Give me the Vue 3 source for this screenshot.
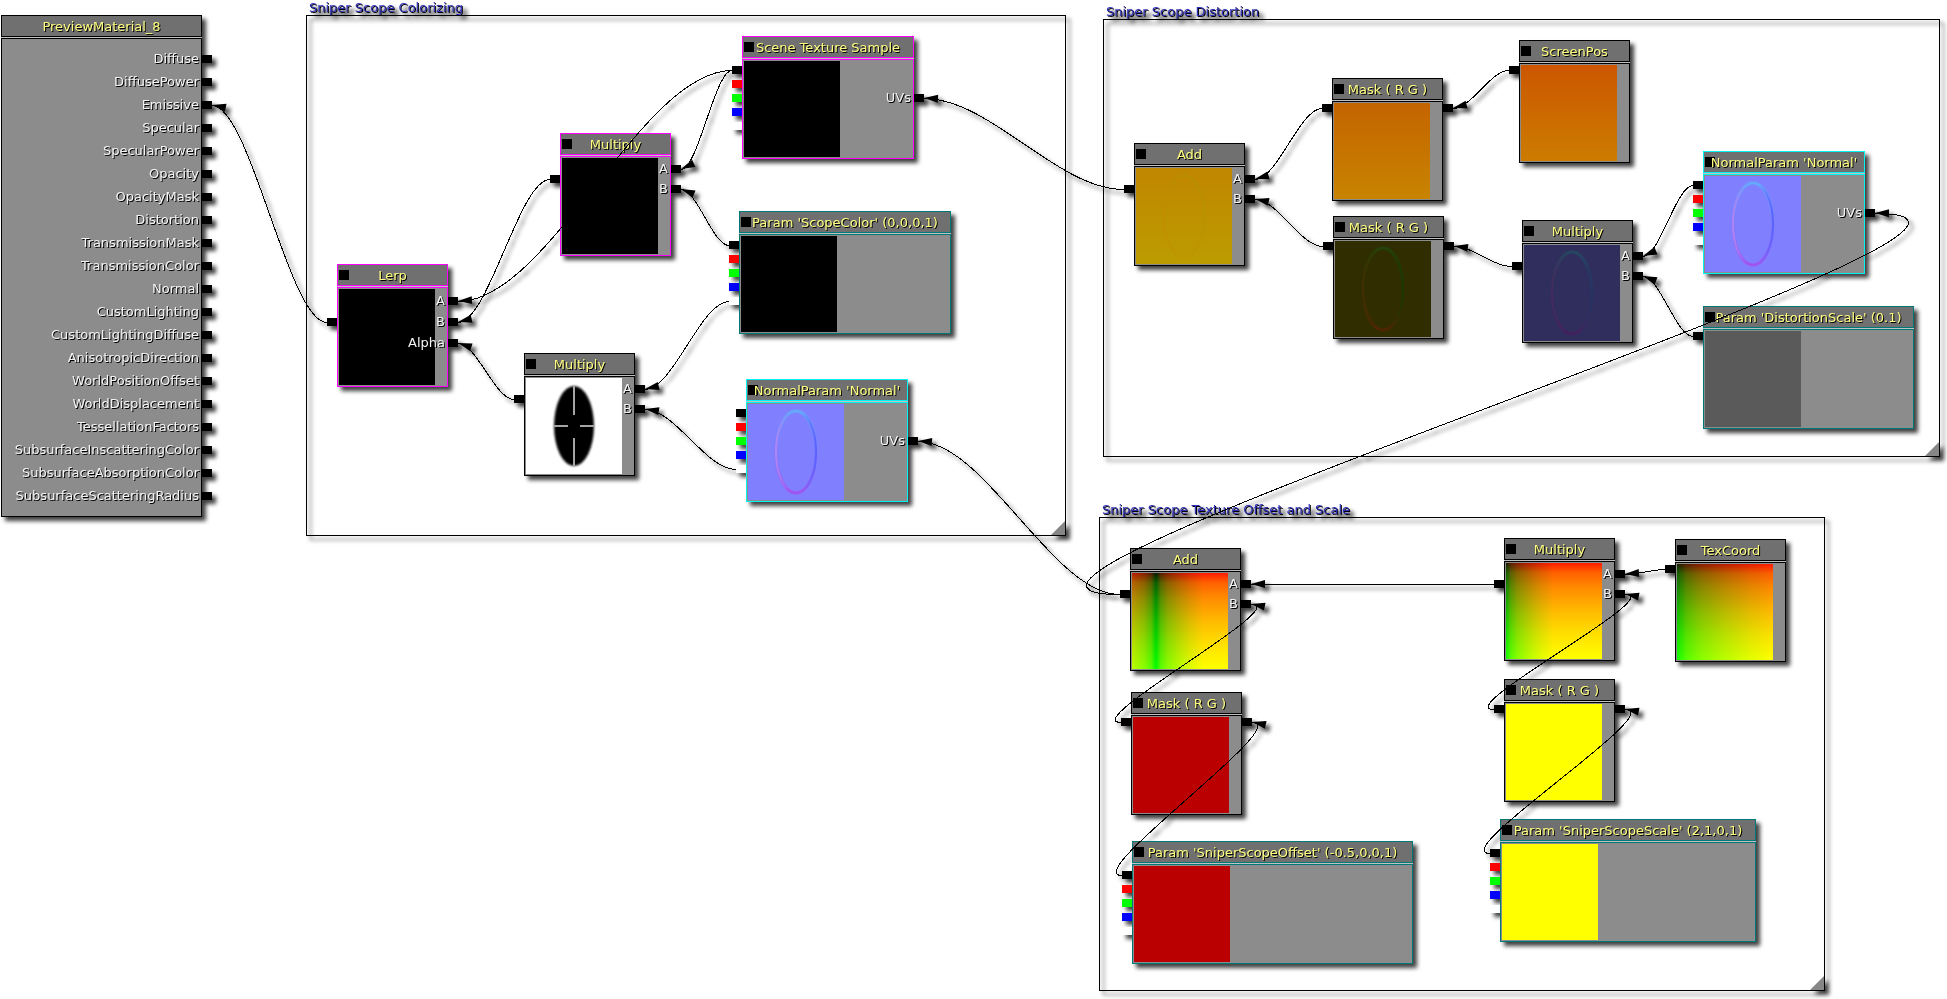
<script setup>
const MAGENTA = '#ff00ff'
const TEAL = '#007878'
const CYAN = '#00f4f4'
const BLACK = '#000000'

const CHANNELS = ['#000000', '#ff0000', '#00ff00', '#0000ff', '#ffffff']
const channelPins = CHANNELS.map((color, i) => ({ y: 30 + i * 14, color }))
const out = (y) => [{ y, color: BLACK }]
const AB = [{ y: 32, label: 'A' }, { y: 52, label: 'B' }]
const UV = [{ y: 58, label: 'UVs' }]
const SINGLE = [{ y: 26, label: '' }]

const nodes = [
  { id: 'lerp', title: 'Lerp', x: 337, y: 264, w: 111, edge: MAGENTA, art: 'black', outs: out(54),
    ins: [{ y: 33, label: 'A' }, { y: 54, label: 'B' }, { y: 75, label: 'Alpha' }] },
  { id: 'mulColor', title: 'Multiply', x: 560, y: 133, w: 111, edge: MAGENTA, art: 'black', outs: out(42), ins: AB },
  { id: 'scene', title: 'Scene Texture Sample', x: 742, y: 36, w: 172, edge: MAGENTA, art: 'black', outs: channelPins, ins: UV },
  { id: 'scopeColor', title: "Param 'ScopeColor' (0,0,0,1)", x: 739, y: 211, w: 212, edge: TEAL, art: 'black', outs: channelPins, ins: [] },
  { id: 'mulAlpha', title: 'Multiply', x: 524, y: 353, w: 111, edge: BLACK, art: 'reticle', outs: out(42), ins: AB },
  { id: 'normalA', title: "NormalParam 'Normal'", x: 746, y: 379, w: 162, edge: CYAN, art: 'normal', outs: channelPins, ins: UV },

  { id: 'addUv', title: 'Add', x: 1134, y: 143, w: 111, edge: BLACK, art: 'amber', outs: out(42), ins: AB },
  { id: 'maskScreen', title: 'Mask ( R G )', x: 1332, y: 78, w: 111, edge: BLACK, art: 'orange', outs: out(26), ins: SINGLE },
  { id: 'maskNormal', title: 'Mask ( R G )', x: 1333, y: 216, w: 111, edge: BLACK, art: 'olive', outs: out(26), ins: SINGLE },
  { id: 'screenPos', title: 'ScreenPos', x: 1519, y: 40, w: 111, edge: BLACK, art: 'screen', outs: out(26), ins: [] },
  { id: 'mulNormal', title: 'Multiply', x: 1522, y: 220, w: 111, edge: BLACK, art: 'navy', outs: out(42), ins: AB },
  { id: 'normalB', title: "NormalParam 'Normal'", x: 1703, y: 151, w: 162, edge: CYAN, art: 'normal', outs: channelPins, ins: UV },
  { id: 'distScale', title: "Param 'DistortionScale' (0.1)", x: 1703, y: 306, w: 211, edge: TEAL, art: 'gray', outs: out(26), ins: [] },

  { id: 'addOffset', title: 'Add', x: 1130, y: 548, w: 111, edge: BLACK, art: 'uv-offset', outs: out(42), ins: AB },
  { id: 'maskOffset', title: 'Mask ( R G )', x: 1131, y: 692, w: 111, edge: BLACK, art: 'red', outs: out(26), ins: SINGLE },
  { id: 'offset', title: "Param 'SniperScopeOffset' (-0.5,0,0,1)", x: 1132, y: 841, w: 281, edge: TEAL, art: 'red', outs: channelPins, ins: [] },
  { id: 'mulScale', title: 'Multiply', x: 1504, y: 538, w: 111, edge: BLACK, art: 'uv-scaled', outs: out(42), ins: AB },
  { id: 'texCoord', title: 'TexCoord', x: 1675, y: 539, w: 111, edge: BLACK, art: 'uv', outs: out(26), ins: [] },
  { id: 'maskScale', title: 'Mask ( R G )', x: 1504, y: 679, w: 111, edge: BLACK, art: 'yellow', outs: out(26), ins: SINGLE },
  { id: 'scale', title: "Param 'SniperScopeScale' (2,1,0,1)", x: 1500, y: 819, w: 256, edge: TEAL, art: 'yellow', outs: channelPins, ins: [] },
]

const materialInputs = [
  'Diffuse', 'DiffusePower', 'Emissive', 'Specular', 'SpecularPower', 'Opacity', 'OpacityMask',
  'Distortion', 'TransmissionMask', 'TransmissionColor', 'Normal', 'CustomLighting',
  'CustomLightingDiffuse', 'AnisotropicDirection', 'WorldPositionOffset', 'WorldDisplacement',
  'TessellationFactors', 'SubsurfaceInscatteringColor', 'SubsurfaceAbsorptionColor',
  'SubsurfaceScatteringRadius',
]

const groups = [
  { title: 'Sniper Scope Colorizing', x: 306, y: 15, w: 760, h: 521 },
  { title: 'Sniper Scope Distortion', x: 1103, y: 19, w: 837, h: 438 },
  { title: 'Sniper Scope Texture Offset and Scale', x: 1099, y: 517, w: 726, h: 474 },
]

// [source node, output index, target node, input index]
const links = [
  ['lerp', 0, 'material', 2],
  ['mulColor', 0, 'lerp', 1],
  ['scene', 0, 'lerp', 0],
  ['scene', 0, 'mulColor', 0],
  ['scopeColor', 0, 'mulColor', 1],
  ['scopeColor', 4, 'mulAlpha', 0],
  ['normalA', 4, 'mulAlpha', 1],
  ['mulAlpha', 0, 'lerp', 2],
  ['addUv', 0, 'scene', 0],
  ['addOffset', 0, 'normalA', 0],
  ['addOffset', 0, 'normalB', 0],
  ['maskScreen', 0, 'addUv', 0],
  ['maskNormal', 0, 'addUv', 1],
  ['screenPos', 0, 'maskScreen', 0],
  ['mulNormal', 0, 'maskNormal', 0],
  ['normalB', 0, 'mulNormal', 0],
  ['distScale', 0, 'mulNormal', 1],
  ['mulScale', 0, 'addOffset', 0],
  ['maskOffset', 0, 'addOffset', 1],
  ['offset', 0, 'maskOffset', 0],
  ['texCoord', 0, 'mulScale', 0],
  ['maskScale', 0, 'mulScale', 1],
  ['scale', 0, 'maskScale', 0],
]

const byId = Object.fromEntries(nodes.map((n) => [n.id, n]))

function outputPoint(id, i) {
  const n = byId[id]
  return { x: n.x - 10, y: n.y + n.outs[i].y + 4 }
}

function inputPoint(id, i) {
  if (id === 'material') return { x: 212, y: 59 + i * 23 }
  const n = byId[id]
  return { x: n.x + n.w + 10, y: n.y + n.ins[i].y + 4 }
}

const wires = links.map(([from, o, to, i]) => {
  const p = outputPoint(from, o)
  const q = inputPoint(to, i)
  const d = Math.abs(p.x - q.x) / 3
  const t = Math.min(0.25, 9 / Math.hypot(p.x - q.x, p.y - q.y))
  const u = 1 - t
  const bx = 3 * t * u * u * d + 3 * t * t * u * (p.x - q.x - d) + t * t * t * (p.x - q.x)
  const by = (3 * t * t * u + t * t * t) * (p.y - q.y)
  const len = Math.hypot(bx, by) || 1
  const ux = bx / len
  const uy = by / len
  const cx = q.x + ux * 14
  const cy = q.y + uy * 14
  return {
    d: `M${p.x} ${p.y + 0.5}C${p.x - d} ${p.y + 0.5} ${q.x + d} ${q.y + 0.5} ${q.x} ${q.y + 0.5}`,
    arrow: `${q.x},${q.y} ${cx - uy * 4},${cy + ux * 4} ${cx + uy * 4},${cy - ux * 4}`,
  }
})

const ovals = {
  normal: { hi: '#5cbcf8', mid: '#7878ff', lo: '#b040e8', left: '#c088f0', right: '#5058ff', o: 0.8 },
  olive: { hi: '#1c5010', mid: '#302e00', lo: '#642008', left: '#4a3000', right: '#103c08', o: 0.7 },
  navy: { hi: '#205868', mid: '#302e5c', lo: '#501860', left: '#4c2c60', right: '#203868', o: 0.7 },
  amber: { hi: '#b49004', mid: '#bc9000', lo: '#c09400', left: '#c48c00', right: '#b89400', o: 0.5 },
}

const box = (o) => ({ left: o.x + 'px', top: o.y + 'px', width: o.w + 'px', height: o.h ? o.h + 'px' : null })
</script>

<template>
  <main class="canvas">
    <section v-for="g in groups" :key="g.title" class="group" :style="box(g)">
      <h2 class="group-title">{{ g.title }}</h2>
      <span class="grip"></span>
    </section>

    <article class="node material">
      <header class="bar"><h3 class="title">PreviewMaterial_8</h3></header>
      <ul class="inputs">
        <li v-for="name in materialInputs" :key="name" class="input-row">
          {{ name }}<span class="input-pin"></span>
        </li>
      </ul>
    </article>

    <article v-for="n in nodes" :key="n.id" class="node" :style="{ ...box(n), '--edge': n.edge }">
      <header class="bar">
        <button type="button" class="toggle" :aria-label="'Toggle preview of ' + n.title"></button>
        <h3 class="title">{{ n.title }}</h3>
      </header>
      <div class="body">
        <div class="preview" :class="'art-' + n.art">
          <svg v-if="n.art === 'reticle'" viewBox="0 0 96 96">
            <defs>
              <filter id="soft" x="-20%" y="-20%" width="140%" height="140%">
                <feGaussianBlur stdDeviation="1" />
              </filter>
            </defs>
            <ellipse cx="48" cy="48" rx="20" ry="40" filter="url(#soft)" />
            <path d="M48 8V37M48 60V88M28 48H42M54 48H68" stroke="#a4a4a4" stroke-width="2" />
          </svg>
          <svg v-else-if="ovals[n.art]" viewBox="0 0 96 96">
            <defs>
              <linearGradient :id="n.id + '-v'" x1="58" y1="6" x2="38" y2="90" gradientUnits="userSpaceOnUse">
                <stop offset="0" :stop-color="ovals[n.art].hi" />
                <stop offset="0.5" :stop-color="ovals[n.art].mid" />
                <stop offset="1" :stop-color="ovals[n.art].lo" />
              </linearGradient>
              <linearGradient :id="n.id + '-h'" x1="27" y1="0" x2="69" y2="0" gradientUnits="userSpaceOnUse">
                <stop offset="0" :stop-color="ovals[n.art].left" />
                <stop offset="0.35" :stop-color="ovals[n.art].left" stop-opacity="0" />
                <stop offset="0.65" :stop-color="ovals[n.art].right" stop-opacity="0" />
                <stop offset="1" :stop-color="ovals[n.art].right" />
              </linearGradient>
            </defs>
            <g fill="none" :opacity="ovals[n.art].o">
              <ellipse cx="48" cy="48" rx="20" ry="41" :stroke="`url(#${n.id}-v)`" stroke-width="4" opacity="0.4" />
              <ellipse cx="48" cy="48" rx="20" ry="41" :stroke="`url(#${n.id}-v)`" stroke-width="2" />
              <ellipse cx="48" cy="48" rx="20" ry="41" :stroke="`url(#${n.id}-h)`" stroke-width="2" />
            </g>
          </svg>
        </div>
      </div>
      <span v-for="(p, i) in n.outs" :key="'o' + i" class="pin out" :style="{ top: p.y + 'px', background: p.color }"></span>
      <span v-for="(p, i) in n.ins" :key="'i' + i" class="pin in" :style="{ top: p.y + 'px' }">
        <span class="pin-label">{{ p.label }}</span>
      </span>
    </article>

    <svg class="wires">
      <g v-for="(w, i) in wires" :key="i">
        <path :d="w.d" />
        <polygon :points="w.arrow" />
      </g>
    </svg>
  </main>
</template>

<style>
body {
  background: #fff;
}
</style>

<style scoped>
.canvas {
  position: relative;
  min-height: 100vh;
  overflow: hidden;
  font: 13px/16px "DejaVu Sans", Verdana, sans-serif;
  filter: drop-shadow(4px 4px 2px rgba(0, 0, 0, 0.75));
}
.canvas * {
  box-sizing: border-box;
}

.group {
  position: absolute;
  border: 1px solid #000;
}
.group-title {
  position: absolute;
  left: 2px;
  bottom: 100%;
  margin: 0 0 1px;
  font: inherit;
  line-height: 15px;
  white-space: nowrap;
  color: #3030b8;
  text-shadow: 1px 1px 0 #000;
}
.grip {
  position: absolute;
  right: 0;
  bottom: 0;
  width: 14px;
  height: 14px;
  background: #868686;
  clip-path: polygon(100% 0, 100% 100%, 0 100%);
}

.node {
  --edge: #000;
  position: absolute;
  display: flex;
  flex-direction: column;
  gap: 1px;
  background: #c0c0c0;
}
.bar {
  position: relative;
  display: flex;
  align-items: center;
  justify-content: center;
  height: 22px;
  padding-top: 2px;
  border: 1px solid var(--edge);
  background: #707070;
}
.title {
  position: relative;
  margin: 0;
  font: inherit;
  white-space: nowrap;
  color: #ffff80;
  text-shadow: 1px 1px 0 #000;
}
.toggle {
  position: absolute;
  left: 1px;
  top: 5px;
  width: 10px;
  height: 10px;
  padding: 0;
  border: 0;
  background: #000;
}
.body {
  padding: 1px;
  border: 1px solid var(--edge);
  background: #8c8c8c;
}
.preview {
  width: 96px;
  height: 96px;
}
.preview svg {
  display: block;
  width: 100%;
  height: 100%;
}

.pin {
  position: absolute;
  width: 10px;
  height: 8px;
  background: #000;
}
.out {
  right: 100%;
}
.in {
  left: 100%;
}
.pin-label {
  position: absolute;
  right: 13px;
  top: -4px;
  color: #f4f4f4;
  text-shadow: 1px 1px 0 #000;
}

.material {
  left: 1px;
  top: 15px;
  width: 201px;
}
.inputs {
  display: flex;
  flex-direction: column;
  justify-content: space-between;
  height: 479px;
  margin: 0;
  padding: 12px 2px;
  border: 1px solid #000;
  background: #8c8c8c;
  list-style: none;
}
.input-row {
  position: relative;
  text-align: right;
  color: #f4f4f4;
  text-shadow: 1px 1px 0 #000;
}
.input-pin {
  position: absolute;
  left: 100%;
  top: 4px;
  width: 10px;
  height: 8px;
  margin-left: 3px;
  background: #000;
}

.wires {
  position: absolute;
  inset: 0;
  width: 100%;
  height: 100%;
  pointer-events: none;
}
.wires path {
  fill: none;
  stroke: #000;
  stroke-width: 1px;
  shape-rendering: crispEdges;
}

.art-black { background: #000; }
.art-reticle { background: #fff; }
.art-normal { background: #8080ff; }
.art-amber { background: linear-gradient(#c08600, #bc9c00); }
.art-orange { background: linear-gradient(#c46400, #c88400); }
.art-screen { background: linear-gradient(#cc5600, #cc7c00); }
.art-olive { background: #302e00; }
.art-navy { background: #302e5c; }
.art-gray { background: #5a5a5a; }
.art-red { background: #ba0000; }
.art-yellow { background: #ffff00; }
.art-uv,
.art-uv-scaled,
.art-uv-offset {
  --green: linear-gradient(#001c00, #006000 10%, #008900 25%, #00ba00 50%, #00e100 75%, #00ff00);
  background-blend-mode: screen;
}
.art-uv {
  background-image: linear-gradient(to right, #100000, #580000 10%, #890000 25%, #ba0000 50%, #e10000 75%, #ff0000), var(--green);
}
.art-uv-scaled {
  background-image: linear-gradient(to right, #100000, #580000 5%, #890000 12%, #ba0000 25%, #e10000 37%, #ff0000 50%), var(--green);
}
.art-uv-offset {
  background-image: linear-gradient(to right, #ba0000, #890000 13%, #580000 20%, #000000 25%, #580000 30%, #890000 37%, #ba0000 50%, #e10000 62%, #ff0000 75%), var(--green);
}
</style>
